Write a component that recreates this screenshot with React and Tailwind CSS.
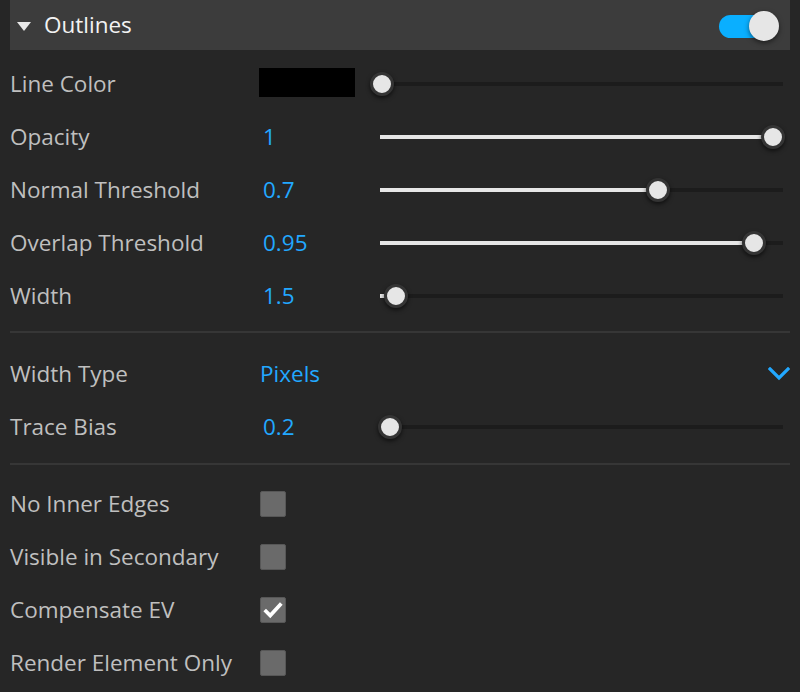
import React from "react";

const sliders = [
  { label: "Line Color", swatch: true, knob: 2 },
  { label: "Opacity", value: "1", knob: 393 },
  { label: "Normal Threshold", value: "0.7", knob: 278 },
  { label: "Overlap Threshold", value: "0.95", knob: 374 },
  { label: "Width", value: "1.5", knob: 16 },
];

const checks = [
  { label: "No Inner Edges", checked: false },
  { label: "Visible in Secondary", checked: false },
  { label: "Compensate EV", checked: true },
  { label: "Render Element Only", checked: false },
];

function Slider({ knob }) {
  return (
    <div className="relative flex-1 h-[24px] flex items-center">
      <div className="w-full h-[4px] bg-[#1c1c1c]" />
      <div
        className="absolute left-0 top-[10px] h-[4px] bg-[#e6e6e6]"
        style={{ width: knob }}
      />
      <div
        className="absolute top-0 w-[24px] h-[24px] rounded-full bg-[#e6e6e6] border-[3px] border-[#343434] shadow-[0_2px_4px_rgba(0,0,0,0.6)]"
        style={{ left: knob - 12 }}
      />
    </div>
  );
}

function Row({ label, children }) {
  return (
    <div className="flex items-center h-[53px] pl-[10px] pr-[17px]">
      <div className="w-[249px] text-[22.5px] text-[#bfbfbf]">{label}</div>
      {children}
    </div>
  );
}

function Divider() {
  return <div className="mx-[10px] h-[2px] bg-[#363636]" />;
}

export default function App() {
  return (
    <div
      className="w-[800px] h-[692px] bg-[#262626] overflow-hidden"
      style={{ fontFamily: '"Open Sans", "Noto Sans", sans-serif' }}
    >
      <div className="mx-[10px] h-[50px] bg-[#3c3c3c] flex items-center pl-[7px] pr-[11px]">
        <div className="w-0 h-0 border-l-[7px] border-r-[7px] border-t-[9px] border-l-transparent border-r-transparent border-t-[#e8e8e8] mt-[2px]" />
        <div className="ml-[13px] text-[22.5px] text-[#f2f2f2]">Outlines</div>
        <div className="ml-auto relative w-[60px] h-[30px] mt-[2px]">
          <div className="absolute left-0 top-[4px] w-[48px] h-[23px] rounded-full bg-[#0aafff]" />
          <div className="absolute right-0 top-0 w-[30px] h-[30px] rounded-full bg-[#e6e6e6] shadow-[0_2px_5px_rgba(0,0,0,0.5)]" />
        </div>
      </div>

      <div className="pt-[7px]">
        {sliders.map((s) => (
          <Row key={s.label} label={s.label}>
            <div className="w-[121px]">
              {s.swatch ? (
                <div className="w-[96px] h-[29px] bg-black -mt-[2px]" />
              ) : (
                <span className="text-[22.5px] text-[#22a8ff] pl-[4px]">
                  {s.value}
                </span>
              )}
            </div>
            <Slider knob={s.knob} />
          </Row>
        ))}
      </div>

      <div className="mt-[9px] mb-[14px]">
        <Divider />
      </div>

      <Row label="Width Type">
        <span className="text-[22.5px] text-[#22a8ff] pl-[1px]">Pixels</span>
        <svg
          className="ml-auto mr-[-7px]"
          width="22"
          height="14"
          viewBox="0 0 22 14"
          fill="none"
        >
          <path
            d="M2 2 L11 11 L20 2"
            stroke="#22a8ff"
            strokeWidth="3.2"
            strokeLinecap="square"
          />
        </svg>
      </Row>
      <Row label="Trace Bias">
        <div className="w-[121px]">
          <span className="text-[22.5px] text-[#22a8ff] pl-[4px]">0.2</span>
        </div>
        <Slider knob={10} />
      </Row>

      <div className="mt-[10px] mb-[12px]">
        <Divider />
      </div>

      {checks.map((c) => (
        <div key={c.label} className="flex items-center h-[53px] pl-[10px]">
          <div className="w-[250px] text-[22.5px] text-[#bfbfbf]">{c.label}</div>
          <div className="w-[26px] h-[26px] bg-[#6a6a6a] border border-[#575757] rounded-[2px] flex items-center justify-center">
            {c.checked && (
              <svg width="26" height="26" viewBox="0 0 26 26" fill="none">
                <path
                  d="M4 13 L10 19 L22 6"
                  stroke="#ffffff"
                  strokeWidth="4"
                />
              </svg>
            )}
          </div>
        </div>
      ))}
    </div>
  );
}
